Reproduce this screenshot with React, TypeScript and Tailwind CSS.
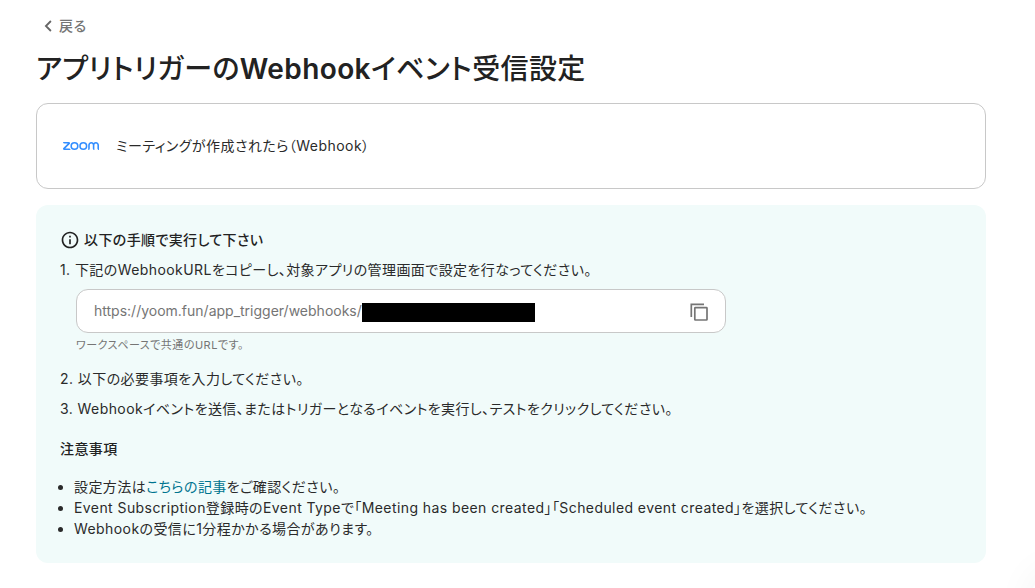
import React from 'react';
import { SiZoom } from 'react-icons/si';

const steps = {
    copy: '下記のWebhookURLをコピーし、対象アプリの管理画面で設定を行なってください。',
    input: '以下の必要事項を入力してください。',
    test: 'Webhookイベントを送信、またはトリガーとなるイベントを実行し、テストをクリックしてください。',
};

function BackIcon() {
    return (
        <svg width="8" height="12" viewBox="0 0 8 12" fill="none" stroke="#666" strokeWidth="1.8">
            <path d="M6.9 1 1.9 6l5 5" />
        </svg>
    );
}

function InfoIcon() {
    return (
        <svg width="20" height="20" viewBox="0 0 24 24" fill="#222">
            <path d="M11 7h2v2h-2zm0 4h2v6h-2zm1-9C6.48 2 2 6.48 2 12s4.48 10 10 10 10-4.48 10-10S17.52 2 12 2m0 18c-4.41 0-8-3.59-8-8s3.59-8 8-8 8 3.59 8 8-3.59 8-8 8" />
        </svg>
    );
}

function CopyIcon() {
    return (
        <svg width="18" height="18" viewBox="0 0 18 18" fill="none" stroke="#757575" strokeWidth="1.7">
            <path d="M1.3 14V1.3H14" />
            <rect x="4.8" y="4.6" width="12.2" height="12.4" rx="0.6" />
        </svg>
    );
}

export default function App() {
    return (
        <div className="relative h-[588px] w-[1035px] overflow-hidden bg-white pt-4 pl-9 font-['Inter','Noto_Sans_CJK_JP',sans-serif] text-sm tracking-[0.42px] text-[#2a2a2a] [font-feature-settings:'palt']">
            {/* Back link */}
            <button className="ml-2 flex h-[19px] items-center gap-[7px] font-medium tracking-[0.6px] text-[#757575]">
                <BackIcon />
                <span>戻る</span>
            </button>

            <h1 className="mt-3.5 h-10 text-[28px] leading-10 font-medium tracking-[0.4px] whitespace-nowrap text-[#222]">
                アプリトリガーの<span className="font-semibold">Webhook</span>イベント受信設定
            </h1>

            {/* Trigger card */}
            <div className="mt-[14px] flex h-[86px] w-[950px] items-center gap-[17px] rounded-xl border border-[#c8c8c8] pl-[26px]">
                <SiZoom size={36} color="#338eff" />
                <span className="tracking-[0.46px]">ミーティングが作成されたら（Webhook）</span>
            </div>

            {/* Instructions */}
            <section className="mt-4 h-[358px] w-[950px] rounded-xl bg-[#f1fbfa] pt-6 pl-6">
                <h2 className="flex h-[22px] items-center gap-1 font-medium tracking-[0.38px] text-[#222]">
                    <InfoIcon />
                    以下の手順で実行して下さい
                </h2>
                <div className="mt-2 h-[22px] leading-[22px] whitespace-nowrap">1. {steps.copy}</div>
                <div className="mt-2 ml-4 flex h-11 w-[650px] items-center rounded-xl border border-[#c8c8c8] bg-white pr-[17px] pl-[17px]">
                    <span className="tracking-normal text-[#757575]">https://yoom.fun/app_trigger/webhooks/</span>
                    <span className="mt-0.5 h-[19px] w-[173px] bg-black" />
                    <button className="mt-0.5 ml-auto">
                        <CopyIcon />
                    </button>
                </div>
                <p className="mt-1 ml-4 h-4 text-[11px] leading-4 tracking-[0.5px] text-[#757575]">ワークスペースで共通のURLです。</p>
                <div className="mt-[15px] h-[22px] leading-[22px]">2. {steps.input}</div>
                <div className="mt-2 h-[22px] leading-[22px] whitespace-nowrap">3. {steps.test}</div>
                <h3 className="mt-[18px] h-[22px] leading-[22px] font-medium text-[#222]">注意事項</h3>
                <ul className="mt-4 list-disc pl-[14px] leading-[21px] whitespace-nowrap">
                    <li>
                        設定方法は<a className="text-[#00748f]">こちらの記事</a>をご確認ください。
                    </li>
                    <li>Event Subscription登録時のEvent Typeで「Meeting has been created」「Scheduled event created」を選択してください。</li>
                    <li>Webhookの受信に1分程かかる場合があります。</li>
                </ul>
            </section>

            {/* Soft shadow of the chat launcher sitting past the corner */}
            <div className="absolute top-[570px] left-[1030px] h-16 w-16 rounded-full shadow-[0_0_40px_rgba(0,0,0,0.06)]" />
        </div>
    );
}
